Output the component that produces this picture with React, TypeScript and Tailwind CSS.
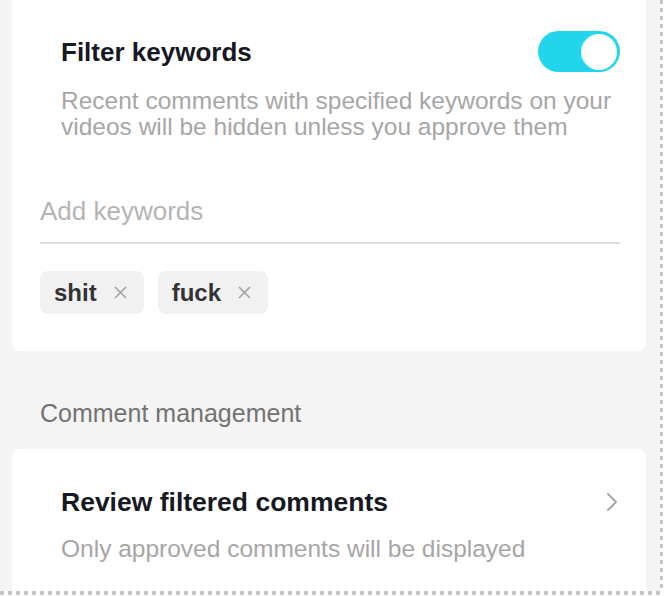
import { FunctionComponent } from "react";

const keywords = ["shit", "fuck"];

const CloseIcon = () => (
  <svg width="13" height="13" viewBox="0 0 13 13" fill="none">
    <path d="M1 1l11 11M12 1L1 12" stroke="#a3a3a3" strokeWidth="1.6" />
  </svg>
);

const Chevron = () => (
  <svg width="12" height="20" viewBox="0 0 12 20" fill="none">
    <path d="M2 2l8 8-8 8" stroke="#a8a8a8" strokeWidth="2" strokeLinecap="round" strokeLinejoin="round" />
  </svg>
);

const Toggle = () => (
  <div className="flex h-[41px] w-[82px] items-center justify-end rounded-full bg-[#20d5ec] pr-[3px]">
    <div className="h-[36px] w-[36px] rounded-full bg-white" />
  </div>
);

const App: FunctionComponent = () => {
  return (
    <div className="h-[596px] w-[664px] bg-white font-['Liberation_Sans',Arial,sans-serif]">
      <div className="flex h-[591px]">
        <div className="w-[660px] overflow-hidden bg-[#f4f4f4] pl-3 pr-[14px]">
          {/* filter keywords card */}
          <div className="rounded-b-lg bg-white px-7 pb-[37px] pt-[31px] pr-[26px]">
            <div className="flex items-center justify-between pl-[21px]">
              <span className="text-[26px] font-bold leading-[40px] text-[#161823]">
                Filter keywords
              </span>
              <Toggle />
            </div>
            <p className="mt-4 pl-[21px] text-[24.5px] leading-[26px] text-[#a6a6a6]">
              Recent comments with specified keywords on your videos will be
              hidden unless you approve them
            </p>
            <div className="mt-[58px] border-b-2 border-[#dcdcdc] pb-[18px] text-[26px] leading-[26px] text-[#b4b4b4]">
              Add keywords
            </div>
            <div className="mt-[27px] flex gap-[14px]">
              {keywords.map((k) => (
                <div
                  key={k}
                  className="flex h-[43px] items-center gap-[17px] rounded-lg bg-[#f1f1f1] pl-[14px] pr-[17px]"
                >
                  <span className="text-[24px] font-bold text-[#333333]">{k}</span>
                  <CloseIcon />
                </div>
              ))}
            </div>
          </div>

          <div className="mt-[49px] pl-7 text-[25px] leading-[26px] text-[#737373]">
            Comment management
          </div>

          {/* review card */}
          <div className="mt-[23px] h-[200px] rounded-t-lg bg-white pl-[49px] pr-[28px] pt-10">
            <div className="flex items-center justify-between">
              <span className="text-[26.5px] font-bold leading-[26px] text-[#161823]">
                Review filtered comments
              </span>
              <Chevron />
            </div>
            <p className="mt-[21px] text-[24.5px] leading-[26px] text-[#a6a6a6]">
              Only approved comments will be displayed
            </p>
          </div>
        </div>
        <div className="w-[3px] bg-[repeating-linear-gradient(to_bottom,#c6c6c6_0_4px,transparent_4px_8px)]" />
      </div>
      <div className="h-[4px] w-[663px] bg-[repeating-linear-gradient(to_right,#c6c6c6_0_4px,transparent_4px_8px)]" />
    </div>
  );
};

export default App;
